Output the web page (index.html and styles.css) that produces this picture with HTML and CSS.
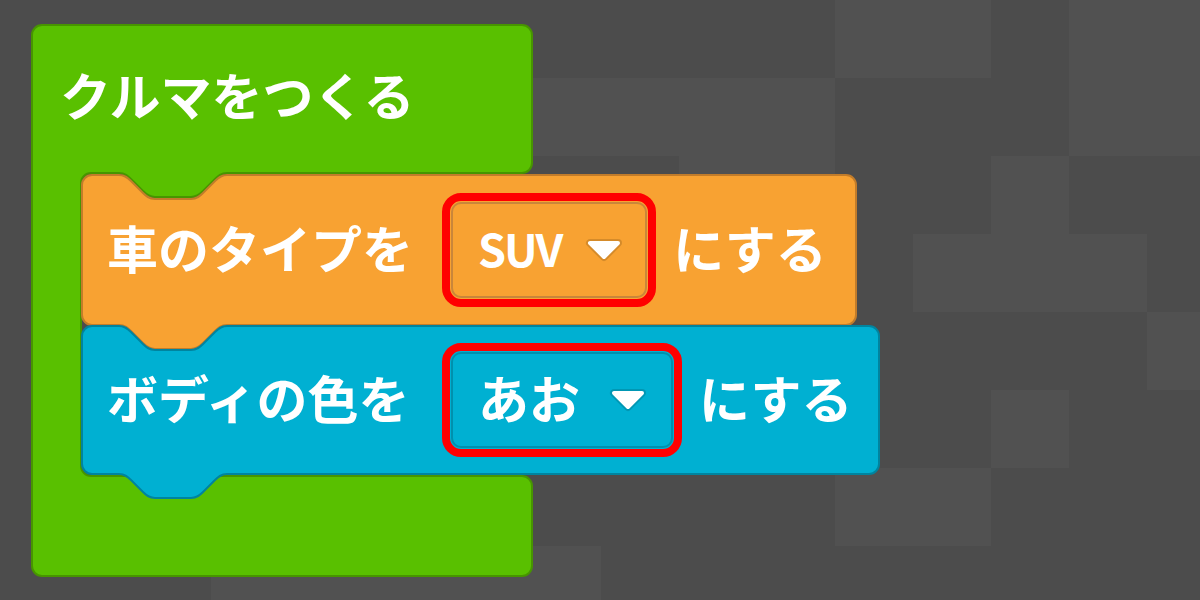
FILE: index.html
```html
<!DOCTYPE html>
<html lang="ja">
<head>
<meta charset="utf-8">
<title>クルマをつくる</title>
<link rel="stylesheet" href="styles.css">
</head>
<body>
<main class="workspace">
  <div class="grid">
    <div class="cell"></div><div class="cell"></div><div class="cell"></div><div class="cell"></div><div class="cell"></div><div class="cell"></div><div class="cell"></div><div class="cell"></div><div class="cell"></div><div class="cell"></div><div class="cell"></div><div class="cell l"></div><div class="cell l"></div><div class="cell"></div><div class="cell l"></div><div class="cell l"></div>
    <div class="cell"></div><div class="cell"></div><div class="cell"></div><div class="cell"></div><div class="cell"></div><div class="cell"></div><div class="cell"></div><div class="cell l"></div><div class="cell l"></div><div class="cell l"></div><div class="cell l"></div><div class="cell"></div><div class="cell"></div><div class="cell"></div><div class="cell l"></div><div class="cell l"></div>
    <div class="cell"></div><div class="cell"></div><div class="cell"></div><div class="cell"></div><div class="cell"></div><div class="cell"></div><div class="cell"></div><div class="cell"></div><div class="cell"></div><div class="cell l"></div><div class="cell l"></div><div class="cell"></div><div class="cell"></div><div class="cell l"></div><div class="cell"></div><div class="cell"></div>
    <div class="cell"></div><div class="cell"></div><div class="cell"></div><div class="cell"></div><div class="cell"></div><div class="cell"></div><div class="cell"></div><div class="cell"></div><div class="cell"></div><div class="cell"></div><div class="cell"></div><div class="cell"></div><div class="cell l"></div><div class="cell l"></div><div class="cell l"></div><div class="cell"></div>
    <div class="cell"></div><div class="cell"></div><div class="cell"></div><div class="cell"></div><div class="cell"></div><div class="cell"></div><div class="cell"></div><div class="cell"></div><div class="cell"></div><div class="cell"></div><div class="cell"></div><div class="cell"></div><div class="cell"></div><div class="cell"></div><div class="cell"></div><div class="cell l"></div>
    <div class="cell"></div><div class="cell"></div><div class="cell"></div><div class="cell"></div><div class="cell"></div><div class="cell"></div><div class="cell"></div><div class="cell"></div><div class="cell"></div><div class="cell"></div><div class="cell"></div><div class="cell"></div><div class="cell"></div><div class="cell l"></div><div class="cell"></div><div class="cell"></div>
    <div class="cell"></div><div class="cell"></div><div class="cell"></div><div class="cell"></div><div class="cell"></div><div class="cell"></div><div class="cell"></div><div class="cell"></div><div class="cell"></div><div class="cell"></div><div class="cell"></div><div class="cell l"></div><div class="cell l"></div><div class="cell"></div><div class="cell"></div><div class="cell"></div>
    <div class="cell"></div><div class="cell"></div><div class="cell"></div><div class="cell l"></div><div class="cell l"></div><div class="cell l"></div><div class="cell l"></div><div class="cell l"></div><div class="cell"></div><div class="cell"></div><div class="cell"></div><div class="cell"></div><div class="cell"></div><div class="cell"></div><div class="cell"></div><div class="cell"></div>
  </div>

  <div class="script">
    <svg class="shape" width="502" height="553" viewBox="0 0 502 553">
      <path class="shape-green" d="M1,11 A10,10 0 0 1 11,1 H491 A10,10 0 0 1 501,11 V139 A10,10 0 0 1 491,149 H196 c-6,0 -9,3 -12,6 l-12,12 c-3,3 -6,6 -12,6 h-36 c-6,0 -9,-3 -12,-6 l-12,-12 c-3,-3 -6,-6 -12,-6 H60 A10,10 0 0 0 50,159 V442 A10,10 0 0 0 60,452 H491 A10,10 0 0 1 501,462 V542 A10,10 0 0 1 491,552 H11 A10,10 0 0 1 1,542 Z"/>
    </svg>
    <div class="c-head">
      <span class="label">クルマをつくる</span>
    </div>
    <div class="c-mouth">
      <div class="block block-orange">
        <svg class="shape" width="776" height="152" viewBox="0 0 776 152">
          <path class="shape-orange" d="M1,11 A10,10 0 0 1 11,1 H38 c6,0 9,3 12,6 l12,12 c3,3 6,6 12,6 h36 c6,0 9,-3 12,-6 l12,-12 c3,-3 6,-6 12,-6 H765 A10,10 0 0 1 775,11 V141 A10,10 0 0 1 765,151 H146 c-6,0 -9,3 -12,6 l-12,12 c-3,3 -6,6 -12,6 h-36 c-6,0 -9,-3 -12,-6 l-12,-12 c-3,-3 -6,-6 -12,-6 H11 A10,10 0 0 1 1,141 Z"/>
        </svg>
        <div class="row">
          <span class="label lead">車のタイプを</span>
          <span class="dropdown dropdown-orange">
            <span class="value value-latin">SUV</span>
            <svg class="arrow" width="40" height="24" viewBox="0 0 40 24">
              <path class="arrow-edge" d="M6,5 H34 L20,19 Z"/>
              <path class="arrow-fill" d="M6,5 H34 L20,19 Z"/>
            </svg>
          </span>
          <span class="label">にする</span>
        </div>
      </div>
      <div class="block block-blue">
        <svg class="shape" width="799" height="150" viewBox="0 0 799 150">
          <path class="shape-blue" d="M1,11 A10,10 0 0 1 11,1 H38 c6,0 9,3 12,6 l12,12 c3,3 6,6 12,6 h36 c6,0 9,-3 12,-6 l12,-12 c3,-3 6,-6 12,-6 H788 A10,10 0 0 1 798,11 V139 A10,10 0 0 1 788,149 H146 c-6,0 -9,3 -12,6 l-12,12 c-3,3 -6,6 -12,6 h-36 c-6,0 -9,-3 -12,-6 l-12,-12 c-3,-3 -6,-6 -12,-6 H11 A10,10 0 0 1 1,139 Z"/>
        </svg>
        <div class="row">
          <span class="label lead">ボディの色を</span>
          <span class="dropdown dropdown-blue">
            <span class="value">あお</span>
            <svg class="arrow" width="40" height="24" viewBox="0 0 40 24">
              <path class="arrow-edge" d="M6,5 H34 L20,19 Z"/>
              <path class="arrow-fill" d="M6,5 H34 L20,19 Z"/>
            </svg>
          </span>
          <span class="label">にする</span>
        </div>
      </div>
    </div>
  </div>
</main>
</body>
</html>
```
FILE: styles.css
```css
html, body {
  margin: 0;
  padding: 0;
  background: #4c4c4c;
}

.workspace {
  position: relative;
  width: 1200px;
  height: 600px;
  overflow: hidden;
  font-family: "Noto Sans CJK JP", "Noto Sans", sans-serif;
  color: #ffffff;
}

.grid {
  display: grid;
  grid-template-columns: repeat(16, 78px);
  grid-auto-rows: 78px;
  width: 1248px;
  margin-left: -23px;
}

.cell {
  background: #4c4c4c;
}

.cell.l {
  background: #515151;
}

.script {
  position: absolute;
  left: 31px;
  top: 24px;
  width: 502px;
  height: 553px;
}

.shape {
  position: absolute;
  left: 0;
  top: 0;
  overflow: visible;
}

.shape path {
  stroke-width: 2;
}

.shape-green {
  fill: #59c000;
  stroke: #479500;
}

.shape-orange {
  fill: #f8a232;
  stroke: #c27c2a;
}

.shape-blue {
  fill: #00b0d2;
  stroke: #00849f;
}

.c-head {
  position: relative;
  height: 150px;
  box-sizing: border-box;
  display: flex;
  align-items: center;
  padding-left: 29px;
  padding-bottom: 5px;
}

.c-mouth {
  position: relative;
  padding-left: 50px;
}

.block {
  position: relative;
}

.block-orange {
  width: 776px;
  height: 152px;
}

.block-blue {
  width: 799px;
  height: 150px;
  margin-top: -1px;
}

.row {
  position: relative;
  height: 100%;
  box-sizing: border-box;
  display: flex;
  align-items: center;
  padding-left: 26px;
}

.label {
  font-size: 51px;
  font-weight: 700;
  line-height: 1;
  white-space: nowrap;
  padding-bottom: 5px;
}

.lead {
  flex: none;
  width: 344px;
}

.dropdown {
  flex: none;
  display: flex;
  align-items: center;
  gap: 23px;
  height: 96px;
  box-sizing: border-box;
  margin-right: 26px;
  padding: 0 21px 0 25px;
  border: 2px solid;
  border-radius: 10px;
  outline: 8px solid #ff0000;
  outline-offset: 1px;
}

.dropdown-orange {
  border-color: #c9863a;
}

.dropdown-blue {
  border-color: #0090ad;
  gap: 28px;
  padding-right: 23px;
}

.value {
  font-size: 51px;
  font-weight: 700;
  line-height: 1;
  white-space: nowrap;
  padding-bottom: 5px;
}

.value-latin {
  font-size: 45px;
  letter-spacing: -2px;
}

.arrow {
  display: block;
  flex: none;
}

.arrow-edge {
  fill: rgba(0, 0, 0, 0.14);
  stroke: rgba(0, 0, 0, 0.14);
  stroke-width: 8;
  stroke-linejoin: round;
}

.arrow-fill {
  fill: #ffffff;
  stroke: #ffffff;
  stroke-width: 4;
  stroke-linejoin: round;
}
```
